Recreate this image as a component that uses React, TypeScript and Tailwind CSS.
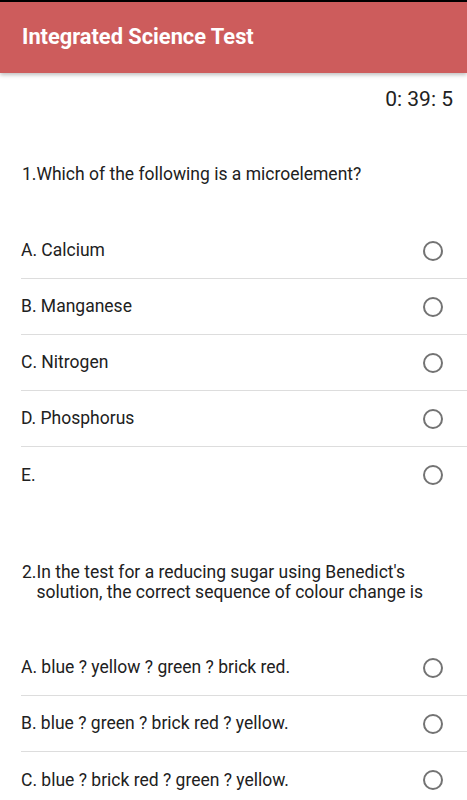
const questions = [
  {
    num: '1.',
    text: 'Which of the following is a microelement?',
    options: ['A. Calcium', 'B. Manganese', 'C. Nitrogen', 'D. Phosphorus', 'E.'],
  },
  {
    num: '2.',
    text: "In the test for a reducing sugar using Benedict's solution, the correct sequence of colour change is",
    options: [
      'A. blue ? yellow ? green ? brick red.',
      'B. blue ? green ? brick red ? yellow.',
      'C. blue ? brick red ? green ? yellow.',
    ],
  },
];

function Radio() {
  return <span className="block w-5 h-5 rounded-full border-2 border-[#737373] shrink-0" />;
}

export default function App() {
  return (
    <div
      className="w-[467px] h-[800px] overflow-hidden bg-white text-[#212121]"
      style={{ fontFamily: 'Roboto, "Liberation Sans", sans-serif' }}
    >
      <div className="h-[2px] bg-black" />
      <header className="h-[71px] bg-[#cd5c5c] flex items-center px-[22px] shadow-[0_2px_4px_rgba(0,0,0,0.25)] relative">
        <h1 className="text-white text-[21.8px] font-bold">Integrated Science Test</h1>
      </header>

      <div className="flex justify-end pr-[14px] pt-[13px] text-[21px] leading-[26px]">0: 39: 5</div>

      {questions.map((q, qi) => (
        <section key={qi} className={qi === 0 ? 'pt-[52px]' : 'pt-[59px]'}>
          <div className="flex pl-[22px] pr-[30px] text-[17.5px] leading-[20px]">
            <span>{q.num}</span>
            <span>{q.text}</span>
          </div>
          <ul className={qi === 0 ? 'mt-[39px] pl-[21px]' : 'mt-[38px] pl-[21px]'}>
            {q.options.map((o, i) => (
              <li
                key={i}
                className={
                  'h-[56px] flex items-center justify-between pr-[24px] text-[17.5px] ' +
                  (i < q.options.length - 1 ? 'border-b border-[#dddddd]' : '')
                }
              >
                <span>{o}</span>
                <Radio />
              </li>
            ))}
          </ul>
        </section>
      ))}
    </div>
  );
}
